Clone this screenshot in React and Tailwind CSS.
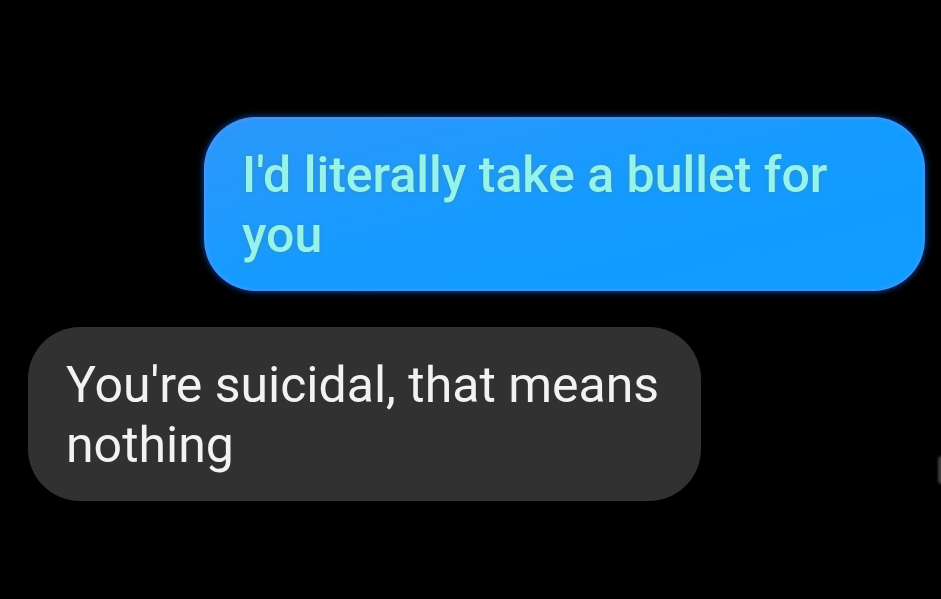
import React from 'react';

// ────────── Conversation ──────────
const MESSAGES = [
  { id: 1, mine: true, text: "I'd literally take a bullet for you" },
  { id: 2, mine: false, text: "You're suicidal, that means nothing" },
];

// ────────── Message bubble ──────────
function Bubble({ mine, text }) {
  return (
    <li
      className={`w-full pl-[38px] pt-7 pb-[26px] text-[50px] leading-[60px] ${
        mine
          ? 'max-w-[721px] self-end rounded-[52px] bg-linear-to-br from-[#2b97fb] via-[#149bff] to-[#109cff] pr-20 font-medium text-[#94f3ec] shadow-[0_0_7px_#0750c4,inset_0_0_5px_#6b94ee] text-shadow-[0_0_4px_#3c8f9f]'
          : 'max-w-[673px] self-start rounded-[52px] bg-[#313131] pr-4 text-[#f2f2f2]'
      }`}
    >
      <p>{text}</p>
    </li>
  );
}

function App() {
  return (
    <main className="relative min-h-screen overflow-hidden bg-black pt-[117px] pr-4 pb-10 pl-7 font-['Roboto',sans-serif]">
      <ul className="flex flex-col gap-9">
        {MESSAGES.map(message => (
          <Bubble key={message.id} mine={message.mine} text={message.text} />
        ))}
      </ul>
      {/* sliver of the scroll handle at the screen edge */}
      <span className="absolute top-[456px] -right-1 h-7 w-[7px] rounded-full bg-[#3c3c3c] blur-[1px]" />
    </main>
  );
}

export default App;
